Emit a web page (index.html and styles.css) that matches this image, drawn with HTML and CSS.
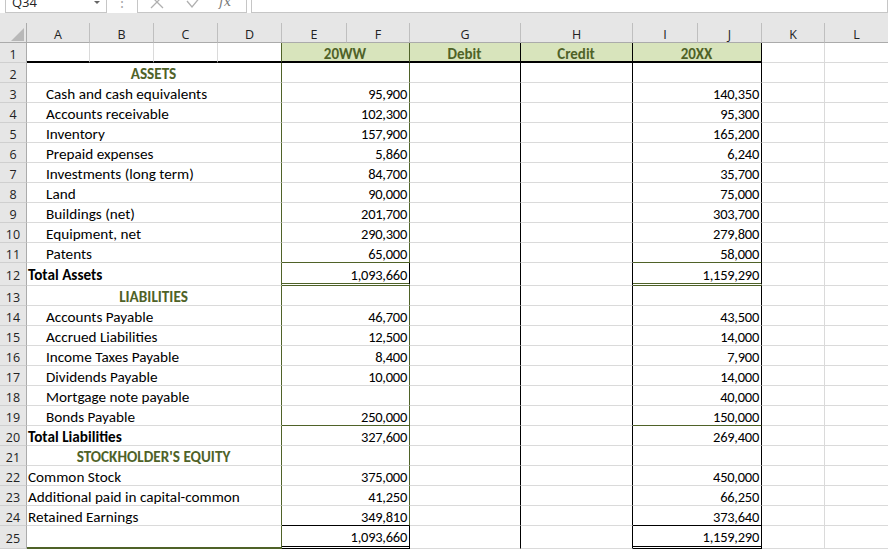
FILE: index.html
```html
<!DOCTYPE html>
<html>
<head>
<meta charset="utf-8">
<link rel="stylesheet" href="styles.css">
</head>
<body>
<div class="fbar">
  <div class="namebox"><span>Q34</span><span class="nb-arrow"></span></div>
  <div class="fsep">⋮</div>
  <div class="fxbox">
    <svg class="ico-x" width="14" height="14" viewBox="0 0 14 14"><path d="M1 1 L13 13 M13 1 L1 13" stroke="#b0b0b0" stroke-width="1.3" fill="none"/></svg>
    <svg class="ico-ok" width="16" height="14" viewBox="0 0 16 14"><path d="M1 6 L6 12 L15 1" stroke="#b0b0b0" stroke-width="1.3" fill="none"/></svg>
    <span class="fx">fx</span>
  </div>
  <div class="finput"></div>
</div>
<div class="band"></div>
<div class="sheet">
  <div class="hd corner"><svg width="27" height="20" viewBox="0 0 27 20"><path d="M24 5 L24 18 L11 18 Z" fill="#b8b8b8"/></svg></div>
  <div class="hd">A</div><div class="hd">B</div><div class="hd">C</div><div class="hd">D</div>
  <div class="hd">E</div><div class="hd">F</div><div class="hd">G</div><div class="hd">H</div>
  <div class="hd">I</div><div class="hd">J</div><div class="hd">K</div><div class="hd">L</div>

  <div class="rh">1</div>
  <div class="c r1"></div><div class="c r1"></div><div class="c r1"></div><div class="c r1 dcol"></div>
  <div class="c r1 gh ef">20WW</div><div class="c r1 gh g">Debit</div><div class="c r1 gh h">Credit</div><div class="c r1 gh ij">20XX</div>
  <div class="c"></div><div class="c"></div>

  <div class="rh">2</div>
  <div class="c ad sec">ASSETS</div><div class="c ef"></div><div class="c g"></div><div class="c h"></div><div class="c ij"></div><div class="c"></div><div class="c"></div>

  <div class="rh">3</div>
  <div class="c ad ind">Cash and cash equivalents</div><div class="c ef">95,900</div><div class="c g"></div><div class="c h"></div><div class="c ij">140,350</div><div class="c"></div><div class="c"></div>

  <div class="rh">4</div>
  <div class="c ad ind">Accounts receivable</div><div class="c ef">102,300</div><div class="c g"></div><div class="c h"></div><div class="c ij">95,300</div><div class="c"></div><div class="c"></div>

  <div class="rh">5</div>
  <div class="c ad ind">Inventory</div><div class="c ef">157,900</div><div class="c g"></div><div class="c h"></div><div class="c ij">165,200</div><div class="c"></div><div class="c"></div>

  <div class="rh">6</div>
  <div class="c ad ind">Prepaid expenses</div><div class="c ef">5,860</div><div class="c g"></div><div class="c h"></div><div class="c ij">6,240</div><div class="c"></div><div class="c"></div>

  <div class="rh">7</div>
  <div class="c ad ind">Investments (long term)</div><div class="c ef">84,700</div><div class="c g"></div><div class="c h"></div><div class="c ij">35,700</div><div class="c"></div><div class="c"></div>

  <div class="rh">8</div>
  <div class="c ad ind">Land</div><div class="c ef">90,000</div><div class="c g"></div><div class="c h"></div><div class="c ij">75,000</div><div class="c"></div><div class="c"></div>

  <div class="rh">9</div>
  <div class="c ad ind">Buildings (net)</div><div class="c ef">201,700</div><div class="c g"></div><div class="c h"></div><div class="c ij">303,700</div><div class="c"></div><div class="c"></div>

  <div class="rh">10</div>
  <div class="c ad ind">Equipment, net</div><div class="c ef">290,300</div><div class="c g"></div><div class="c h"></div><div class="c ij">279,800</div><div class="c"></div><div class="c"></div>

  <div class="rh">11</div>
  <div class="c ad ind">Patents</div><div class="c ef bo">65,000</div><div class="c g"></div><div class="c h"></div><div class="c ij bo">58,000</div><div class="c"></div><div class="c"></div>

  <div class="rh r12">12</div>
  <div class="c ad bold r12">Total Assets</div><div class="c ef dbl r12 rk">1,093,660</div><div class="c g r12"></div><div class="c h r12"></div><div class="c ij dbl r12">1,159,290</div><div class="c r12"></div><div class="c r12"></div>

  <div class="rh">13</div>
  <div class="c ad sec">LIABILITIES</div><div class="c ef"></div><div class="c g"></div><div class="c h"></div><div class="c ij"></div><div class="c"></div><div class="c"></div>

  <div class="rh">14</div>
  <div class="c ad ind">Accounts Payable</div><div class="c ef">46,700</div><div class="c g"></div><div class="c h"></div><div class="c ij">43,500</div><div class="c"></div><div class="c"></div>

  <div class="rh">15</div>
  <div class="c ad ind">Accrued Liabilities</div><div class="c ef">12,500</div><div class="c g"></div><div class="c h"></div><div class="c ij">14,000</div><div class="c"></div><div class="c"></div>

  <div class="rh">16</div>
  <div class="c ad ind">Income Taxes Payable</div><div class="c ef">8,400</div><div class="c g"></div><div class="c h"></div><div class="c ij">7,900</div><div class="c"></div><div class="c"></div>

  <div class="rh">17</div>
  <div class="c ad ind">Dividends Payable</div><div class="c ef">10,000</div><div class="c g"></div><div class="c h"></div><div class="c ij">14,000</div><div class="c"></div><div class="c"></div>

  <div class="rh">18</div>
  <div class="c ad ind">Mortgage note payable</div><div class="c ef"></div><div class="c g"></div><div class="c h"></div><div class="c ij">40,000</div><div class="c"></div><div class="c"></div>

  <div class="rh">19</div>
  <div class="c ad ind">Bonds Payable</div><div class="c ef bo">250,000</div><div class="c g"></div><div class="c h"></div><div class="c ij bo">150,000</div><div class="c"></div><div class="c"></div>

  <div class="rh">20</div>
  <div class="c ad bold">Total Liabilities</div><div class="c ef">327,600</div><div class="c g"></div><div class="c h"></div><div class="c ij">269,400</div><div class="c"></div><div class="c"></div>

  <div class="rh">21</div>
  <div class="c ad sec">STOCKHOLDER'S EQUITY</div><div class="c ef"></div><div class="c g"></div><div class="c h"></div><div class="c ij"></div><div class="c"></div><div class="c"></div>

  <div class="rh">22</div>
  <div class="c ad">Common Stock</div><div class="c ef">375,000</div><div class="c g"></div><div class="c h"></div><div class="c ij">450,000</div><div class="c"></div><div class="c"></div>

  <div class="rh">23</div>
  <div class="c ad">Additional paid in capital-common</div><div class="c ef">41,250</div><div class="c g"></div><div class="c h"></div><div class="c ij">66,250</div><div class="c"></div><div class="c"></div>

  <div class="rh">24</div>
  <div class="c ad">Retained Earnings</div><div class="c ef bk">349,810</div><div class="c g"></div><div class="c h"></div><div class="c ij bk">373,640</div><div class="c"></div><div class="c"></div>

  <div class="rh r25">25</div>
  <div class="c ad bot"></div><div class="c ef dblk rk">1,093,660</div><div class="c g"></div><div class="c h"></div><div class="c ij dblk">1,159,290</div><div class="c"></div><div class="c"></div>

  <div class="rh">26</div>
  <div class="c ad"></div><div class="c ef"></div><div class="c g"></div><div class="c h"></div><div class="c ij"></div><div class="c"></div><div class="c"></div>
</div>
</body>
</html>
```

FILE: styles.css
```css
* { box-sizing: border-box; }
body {
  margin: 0;
  width: 888px;
  height: 549px;
  overflow: hidden;
  background: #ffffff;
  font-family: Carlito, Lato, "Liberation Sans", sans-serif;
}
.fbar {
  height: 13px;
  display: flex;
  overflow: hidden;
  background: #ffffff;
}
.namebox {
  margin-top: -10px;
  margin-left: 5px;
  width: 102px;
  height: 23px;
  border: 1px solid #c6c6c6;
  background: #fff;
  display: flex;
  align-items: center;
  justify-content: space-between;
  padding: 0 6px 0 6px;
  font: 13px "Open Sans", sans-serif;
  color: #222;
}
.nb-arrow {
  width: 0;
  height: 0;
  border-left: 3px solid transparent;
  border-right: 3px solid transparent;
  border-top: 3px solid #666;
  margin-top: 2px;
}
.fsep {
  margin-top: -10px;
  width: 30px;
  height: 23px;
  text-align: center;
  color: #a8a8a8;
  font: 14px "Open Sans", sans-serif;
  line-height: 23px;
}
.fxbox {
  margin-top: -10px;
  width: 110px;
  height: 23px;
  border: 1px solid #c6c6c6;
  background: #fff;
  display: flex;
  align-items: center;
}
.ico-x { margin-left: 12px; }
.ico-ok { margin-left: 22px; }
.fx {
  margin-left: 17px;
  font: italic 13px "DejaVu Serif", serif;
  color: #777;
}
.finput {
  margin-top: -10px;
  margin-left: 4px;
  flex: 1;
  height: 23px;
  border: 1px solid #c6c6c6;
  background: #fff;
}
.band {
  height: 10px;
  background: #e6e6e6;
}
.sheet {
  display: grid;
  grid-template-columns: 27px 63px 64px 64px 64px 65px 63px 111px 112px 65px 64px 63px 64px;
  grid-template-rows: repeat(12, 20px) 23px repeat(12, 20px) 23px 20px;
}
.hd {
  background: #e6e6e6;
  border-right: 1px solid #bfbfbf;
  border-bottom: 1px solid #ababab;
  text-align: center;
  font: 12.5px "Open Sans", sans-serif;
  line-height: 19px;
  padding-top: 2px;
  color: #222;
}
.corner { border-right: 1px solid #ababab; padding-top: 0; }
.corner svg { display: block; }
.rh {
  background: #e6e6e6;
  border-right: 1px solid #ababab;
  border-bottom: 1px solid #cfcfcf;
  text-align: center;
  font: 12.5px "Open Sans", sans-serif;
  line-height: 19px;
  padding-top: 2px;
  color: #222;
}
.rh.r12, .rh.r25 { padding-top: 3px; }
.c {
  border-right: 1px solid #dadada;
  border-bottom: 1px solid #dadada;
  font-size: 14.5px;
  line-height: 19px;
  white-space: nowrap;
  padding: 2px 2px 0 1px;
  color: #000;
}
.r1 { border-bottom: 2px solid #000; }
.dcol { border-right-color: #4f6228; }
.gh {
  background: #d8e4bc;
  color: #4f6228;
  font-weight: bold;
  font-size: 15px;
  text-align: center !important;
  letter-spacing: 0 !important;
}
.ad {
  grid-column: span 4;
  border-right: 1px solid #4f6228;
  font-size: 15.2px;
}
.ef {
  grid-column: span 2;
  border-right: 1px solid #4f6228;
  text-align: right;
  letter-spacing: -0.25px;
}
.g, .h { border-right: 1px solid #000; }
.ij {
  grid-column: span 2;
  border-right: 1px solid #000;
  text-align: right;
  letter-spacing: -0.25px;
}
.ind { padding-left: 19px; }
.bold { font-weight: bold; }
.sec {
  text-align: center;
  color: #4f6228;
  font-weight: bold;
}
.bo { border-bottom: 1px solid #4f6228; }
.bk { border-bottom: 1px solid #000; }
.dbl { border-bottom: 3px double #4f6228; }
.dblk { border-bottom: 3px double #000; }
.rk { border-right-color: #000; }
.c.r12 { padding-top: 3px; }
.ad.bot { border-bottom: 2px solid #4f6228; }
```
